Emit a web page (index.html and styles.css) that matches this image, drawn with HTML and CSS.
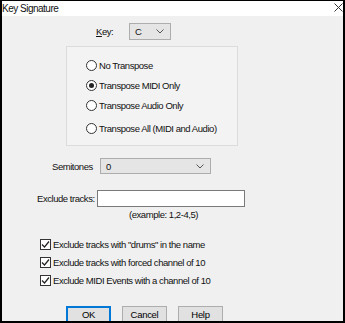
FILE: index.html
```html
<!DOCTYPE html>
<html lang="en">
<head>
  <meta charset="UTF-8" />
  <title>Key Signature</title>
  <link rel="stylesheet" href="styles.css">
</head>
<body>

  <div class="dialog">
    <!-- Title bar -->
    <div class="titlebar">
      <span class="title">Key Signature</span>
      <svg class="close" width="9" height="9" viewBox="0 0 9 9">
        <path d="M0.5 0.5 L8.5 8.5 M8.5 0.5 L0.5 8.5" stroke="#333" stroke-width="1" fill="none"/>
      </svg>
    </div>

    <div class="body">
      <!-- Key -->
      <div class="row key-row">
        <label class="key-label"><u>K</u>ey:</label>
        <div class="combo key-combo">
          <span>C</span>
          <svg class="chev" width="8" height="5" viewBox="0 0 8 5"><path d="M0.5 0.5 L4 4 L7.5 0.5" stroke="#555" fill="none"/></svg>
        </div>
      </div>

      <!-- Transpose options -->
      <div class="group">
        <div class="radio"><span class="dot"></span>No Transpose</div>
        <div class="radio"><span class="dot on"></span>Transpose MIDI Only</div>
        <div class="radio"><span class="dot"></span>Transpose Audio Only</div>
        <div class="radio last"><span class="dot"></span>Transpose All (MIDI and Audio)</div>
      </div>

      <!-- Semitones -->
      <div class="row semi-row">
        <label class="semi-label">Semitones</label>
        <div class="combo semi-combo">
          <span>0</span>
          <svg class="chev" width="8" height="5" viewBox="0 0 8 5"><path d="M0.5 0.5 L4 4 L7.5 0.5" stroke="#555" fill="none"/></svg>
        </div>
      </div>

      <!-- Exclude tracks -->
      <div class="row excl-row">
        <label class="excl-label">Exclude tracks:</label>
        <div class="textbox"></div>
      </div>
      <div class="hint">(example: 1,2-4,5)</div>

      <!-- Checkboxes -->
      <div class="checks">
        <div class="check"><span class="box"><svg width="9" height="9" viewBox="0 0 9 9"><path d="M1 4.5 L3.5 7 L8 1.5" stroke="#222" stroke-width="1.2" fill="none"/></svg></span>Exclude tracks with "drums" in the name</div>
        <div class="check"><span class="box"><svg width="9" height="9" viewBox="0 0 9 9"><path d="M1 4.5 L3.5 7 L8 1.5" stroke="#222" stroke-width="1.2" fill="none"/></svg></span>Exclude tracks with forced channel of 10</div>
        <div class="check"><span class="box"><svg width="9" height="9" viewBox="0 0 9 9"><path d="M1 4.5 L3.5 7 L8 1.5" stroke="#222" stroke-width="1.2" fill="none"/></svg></span>Exclude MIDI Events with a channel of 10</div>
      </div>

      <!-- Buttons -->
      <div class="buttons">
        <button class="btn default">OK</button>
        <button class="btn">Cancel</button>
        <button class="btn">Help</button>
      </div>
    </div>
  </div>

</body>
</html>
```

FILE: styles.css
```css
/* Base */
* {
  margin: 0;
  padding: 0;
  box-sizing: border-box;
}

body {
  font-family: 'Liberation Sans', Arial, sans-serif;
  font-size: 9.5px;
  letter-spacing: -0.45px;
  color: #111;
  background: #fff;
}

/* Window */
.dialog {
  width: 345px;
  height: 323px;
  border: 1px solid #000;
  border-left-width: 2px;
  border-right-width: 2px;
  border-bottom-width: 2px;
  background: #f0f0f0;
  overflow: hidden;
}

.titlebar {
  height: 15px;
  background: #fff;
  display: flex;
  align-items: center;
  justify-content: space-between;
  padding: 0 0 0 0;
}

.title {
  font-size: 10px;
  letter-spacing: -0.5px;
}

.close {
  margin-top: -2px;
}

.body {
  display: flex;
  flex-direction: column;
}

/* Rows */
.row {
  display: flex;
  align-items: center;
}

.combo {
  display: flex;
  align-items: center;
  justify-content: space-between;
  background: #e5e5e5;
  border: 1px solid #adadad;
  padding: 0 6px 0 5px;
}

.key-row {
  margin-top: 7px;
  height: 17px;
}

.key-label {
  margin-left: 94px;
  width: 33px;
}

.key-combo {
  width: 42px;
  height: 17px;
}

/* Group */
.group {
  margin: 6px 0 0 64px;
  width: 172px;
  height: 100px;
  border: 1px solid #dcdcdc;
  background: #f3f3f3;
  padding: 12px 0 0 19px;
  display: flex;
  flex-direction: column;
  gap: 8px;
}

.radio {
  display: flex;
  align-items: center;
  height: 12px;
}

.radio.last {
  margin-top: 3px;
}

.dot {
  width: 11px;
  height: 11px;
  border: 1px solid #333;
  border-radius: 50%;
  background: #fff;
  margin-right: 2px;
  display: flex;
  align-items: center;
  justify-content: center;
}

.dot.on::after {
  content: "";
  width: 5px;
  height: 5px;
  border-radius: 50%;
  background: #222;
}

/* Semitones */
.semi-row {
  margin-top: 12px;
  height: 16px;
}

.semi-label {
  margin-left: 50px;
  width: 48px;
}

.semi-combo {
  width: 111px;
  height: 16px;
}

/* Exclude tracks */
.excl-row {
  margin-top: 16px;
  height: 17px;
}

.excl-label {
  margin-left: 35px;
  width: 60px;
}

.textbox {
  width: 148px;
  height: 17px;
  background: #fff;
  border: 1px solid #7a7a7a;
}

.hint {
  margin: 3px 0 0 127px;
  height: 10px;
  line-height: 10px;
}

/* Checkboxes */
.checks {
  margin: 18px 0 0 38px;
  display: flex;
  flex-direction: column;
  gap: 6px;
}

.check {
  display: flex;
  align-items: center;
  height: 12px;
}

.box {
  width: 11px;
  height: 11px;
  border: 1px solid #333;
  background: #fff;
  margin-right: 2px;
  display: flex;
  align-items: center;
  justify-content: center;
}

/* Buttons */
.buttons {
  margin: 20px 0 0 64px;
  display: flex;
  gap: 11px;
}

.btn {
  font-family: inherit;
  font-size: 9.5px;
  letter-spacing: -0.3px;
  width: 45px;
  height: 17px;
  background: #e1e1e1;
  border: 1px solid #adadad;
  color: #000;
}

.btn.default {
  border: 2px solid #0078d7;
}
```
